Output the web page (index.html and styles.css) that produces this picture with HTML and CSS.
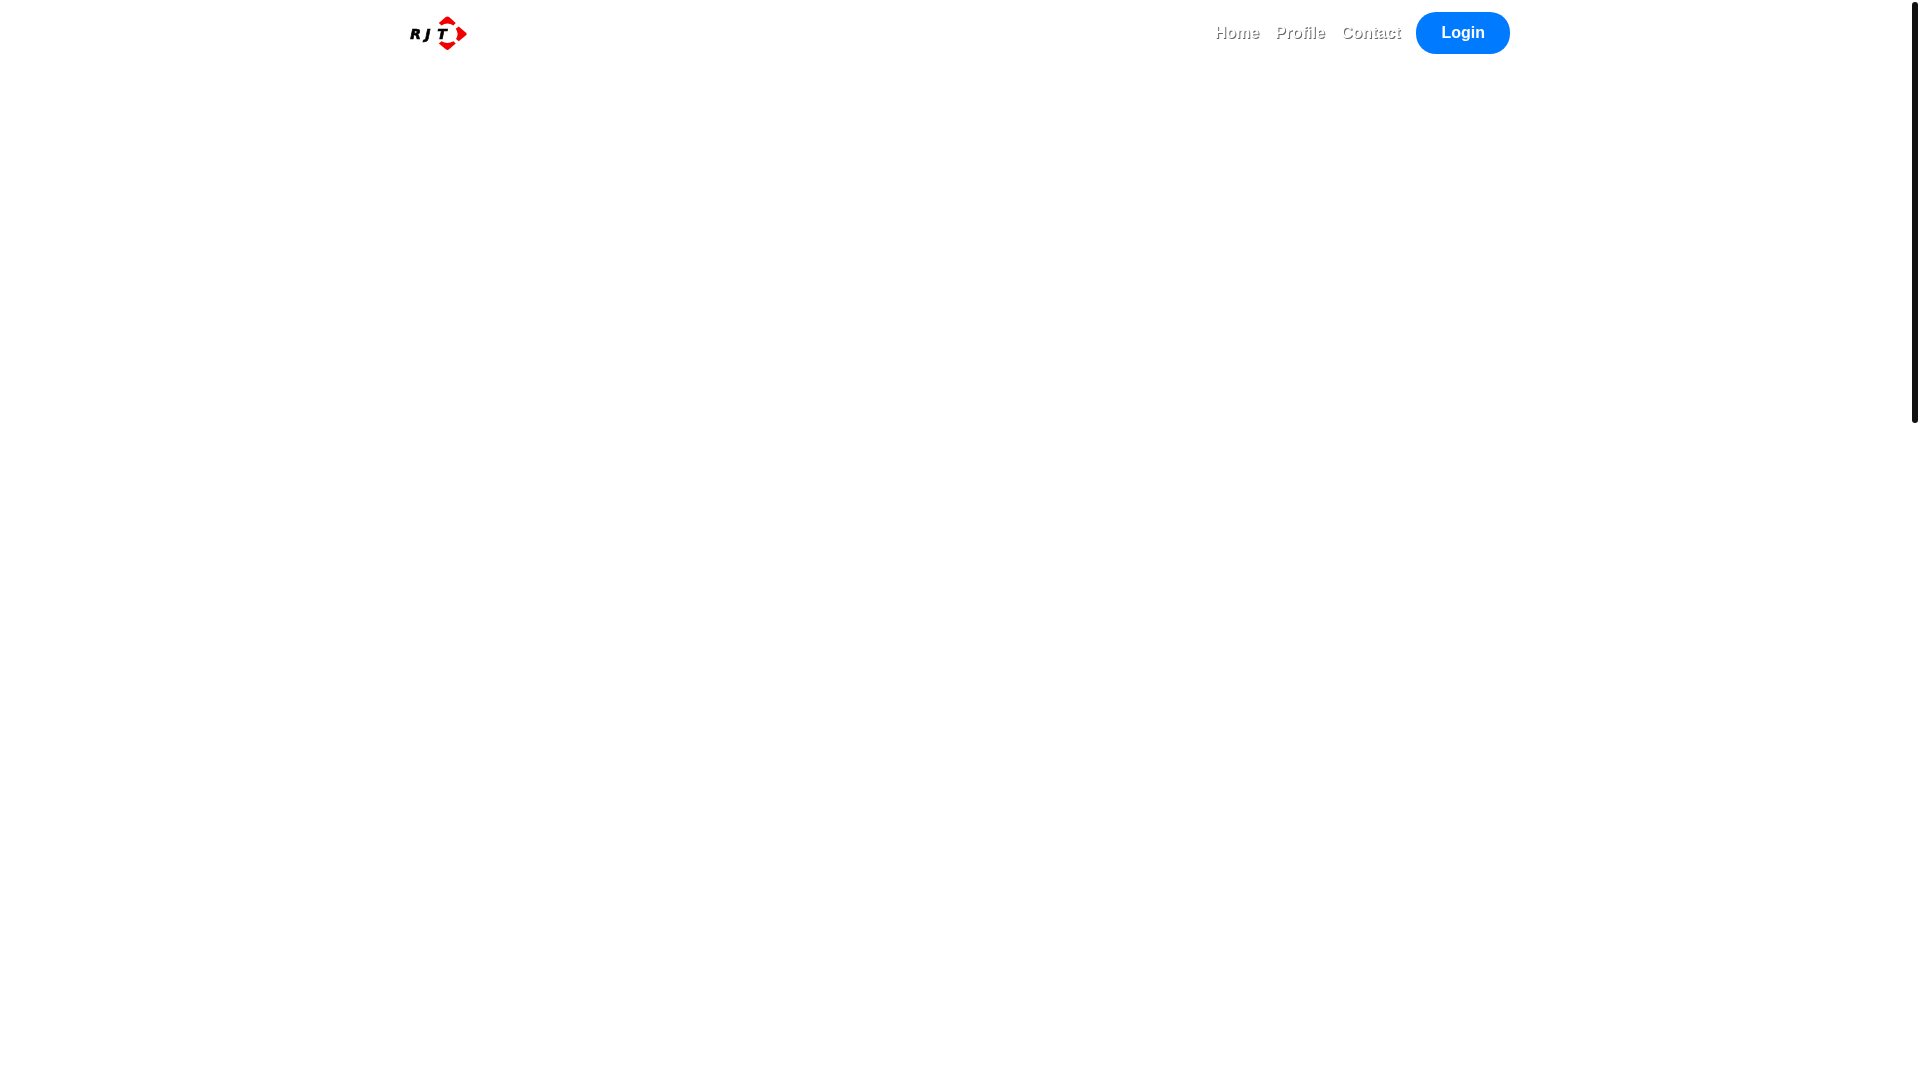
FILE: index.html
```html
<!DOCTYPE html>
<html lang="en">
  <head>
    <meta charset="utf-8">
    <meta name="viewport" content="width=device-width, initial-scale=1">
    <title>RJT</title>
    <link rel="stylesheet" href="styles.css">
  </head>
  <body>
    <header class="header">
      <nav class="navbar">
        <a class="logo" href="#" aria-label="RJT">
          <svg class="logo-img" viewBox="30 22 172 105">
            <g fill="#f00000">
              <path d="M117 43 L138 25 Q143 21 148 25 L168 43 L161 50 Q143 39 125 50 Z" />
              <path d="M177 53 L199 72 Q203 76 199 80 L177 98 L169 91 Q179 75 168 60 Z" />
              <path d="M117 105 L125 98 Q143 109 161 98 L168 105 L148 122 Q143 126 138 122 Z" />
            </g>
            <text class="logo-text" y="90" x="31 76 112">RJT</text>
          </svg>
        </a>
        <ul class="menu">
          <li><a class="menu-link" href="#home">Home</a></li>
          <li><a class="menu-link" href="#profile">Profile</a></li>
          <li><a class="menu-link" href="#contact">Contact</a></li>
          <li><a class="login" href="#login">Login</a></li>
        </ul>
      </nav>
    </header>
    <div class="scroll-thumb"></div>
  </body>
</html>
```

FILE: styles.css
```css
* {
  box-sizing: border-box;
}
body {
  margin: 0;
  background-color: #ffffff;
  font-family: "Liberation Sans", Arial, sans-serif;
  font-size: 16px;
}
a {
  text-decoration: none;
}
.header {
  position: sticky;
  top: 0;
  padding: 12px 16px;
  will-change: transform;
}
.navbar {
  display: flex;
  align-items: center;
  justify-content: space-between;
  max-width: 1100px;
  margin: 0 auto;
}
.logo {
  display: flex;
}
.logo-img {
  width: 57px;
  height: 35px;
}
.logo-text {
  font-family: "DejaVu Sans", sans-serif;
  font-size: 42px;
  font-weight: bold;
  font-style: italic;
  fill: #000000;
  stroke: #000000;
  stroke-width: 2;
}
.menu {
  display: flex;
  align-items: center;
  gap: 16px;
  margin: 0;
  padding: 0;
  list-style: none;
  font-weight: bold;
  line-height: 18px;
}
.menu-link {
  color: #ffffff;
  text-shadow: 1px 1px 0 #666666;
}
.login {
  display: block;
  padding: 12px 25px;
  border-radius: 20px;
  background-color: #007bff;
  color: #ffffff;
}
/* floating scroll indicator */
.scroll-thumb {
  position: fixed;
  top: 2px;
  right: 2px;
  width: 6px;
  height: 39vh;
  border-radius: 3px;
  background-color: #111111;
}
```
